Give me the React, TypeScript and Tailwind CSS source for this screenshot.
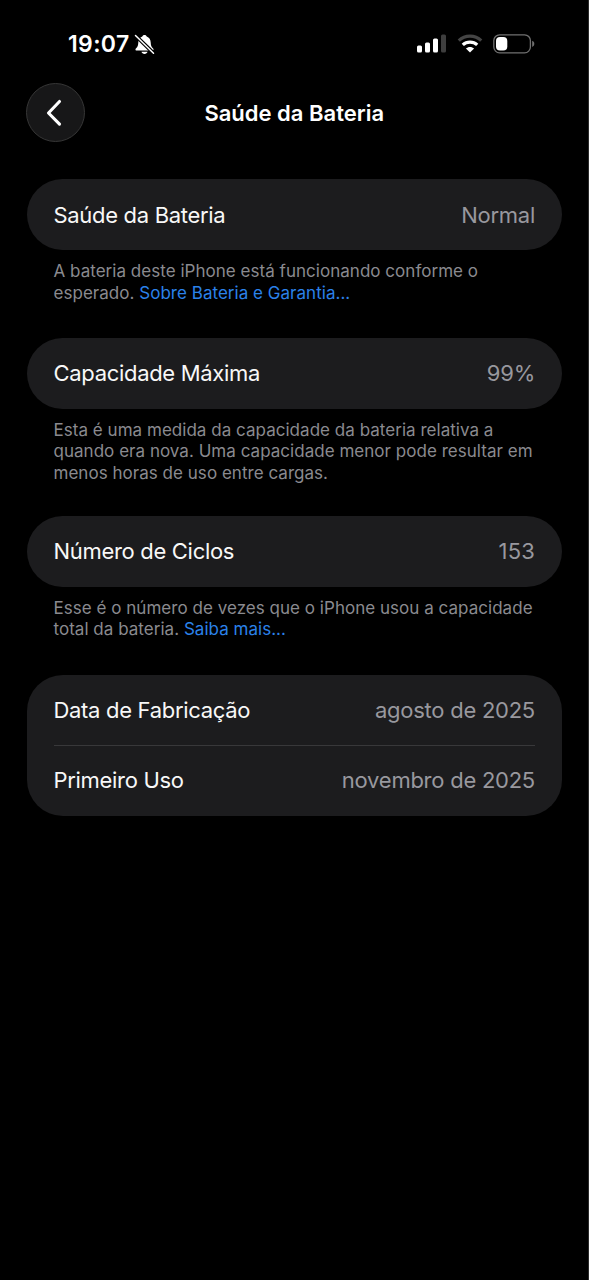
import React from 'react';

interface RowProps {
  label: string;
  value: string;
  valueClass?: string;
}

const Row: React.FC<RowProps> = ({ label, value, valueClass = 'tracking-[-0.25px]' }) => (
  <div className="flex h-[70.5px] items-center justify-between whitespace-nowrap text-[22px] leading-7">
    <span className="tracking-[-0.31px] text-[#f8f8f8]">{label}</span>
    <span className={`text-[#98989e] ${valueClass}`}>{value}</span>
  </div>
);

const Card: React.FC<{ children: React.ReactNode }> = ({ children }) => (
  <div className="rounded-[36px] bg-[#1c1c1e] px-[27px]">{children}</div>
);

const Note: React.FC<{ children: React.ReactNode }> = ({ children }) => (
  <p className="whitespace-nowrap px-[27px] pt-[11.3px] text-[17px] leading-[21.5px] tracking-[0.03px] text-[#8a8a8f]">
    {children}
  </p>
);

const BellOffIcon = () => (
  <svg width="21" height="21" viewBox="0 0 21 21" fill="none">
    <path
      d="M10.5 1C9.3 1 8.5 1.7 8.3 2.5C5.6 3.4 4.4 5.6 4.3 8.4C4.2 11.5 3.6 12.8 2.1 14.2C1 15.3 1.3 16.6 2.8 16.6H18.2C19.7 16.6 20 15.3 18.9 14.2C17.4 12.8 16.8 11.5 16.7 8.4C16.6 5.6 15.4 3.4 12.7 2.5C12.5 1.7 11.7 1 10.5 1Z"
      fill="white"
    />
    <path d="M7.5 17.7H13.5C13.2 19 12 19.9 10.5 19.9S7.8 19 7.5 17.7Z" fill="white" />
    <path d="M1.5 1.5L19.5 19.2" stroke="black" strokeWidth="3.8" />
    <path d="M1.5 1.5L19.5 19.2" stroke="white" strokeWidth="1.5" strokeLinecap="round" />
  </svg>
);

const SignalIcon = () => (
  <svg width="29" height="19" viewBox="0 0 29 19" fill="white">
    <rect x="0" y="11.5" width="5" height="7" rx="1.5" />
    <rect x="8" y="8.5" width="5" height="10" rx="1.5" />
    <rect x="16" y="4.5" width="5" height="14" rx="1.5" />
    <rect x="24" y="0.5" width="5" height="18" rx="1.5" fill="#3e3e3e" />
  </svg>
);

const WifiIcon = () => (
  <svg width="26" height="19" viewBox="0 0 26 19" fill="none">
    <path d="M1.8 6.6C8 0.5 18 0.5 24.2 6.6" stroke="#444" strokeWidth="3.2" />
    <path d="M5.8 10.9C9.8 7.1 16.2 7.1 20.2 10.9" stroke="white" strokeWidth="3.2" />
    <path d="M13 18.6L8.9 14.6C11.2 12.5 14.8 12.5 17.1 14.6Z" fill="white" />
  </svg>
);

const BatteryIcon = () => (
  <svg width="42" height="20" viewBox="0 0 42 20" fill="none">
    <rect x="0.8" y="0.8" width="36.6" height="18" rx="5.8" stroke="#707070" strokeWidth="1.3" />
    <rect x="3" y="3" width="11.3" height="13.6" rx="4" fill="white" />
    <path d="M39.2 6.7C40.6 7.2 41.3 8.4 41.3 9.8S40.6 12.4 39.2 12.9Z" fill="#707070" />
  </svg>
);

const App: React.FC = () => {
  return (
    <div className="h-[1280px] w-[589px] overflow-hidden border-r border-[#2c2c2c] bg-black pl-[26.5px] pr-[26px] font-['Inter',sans-serif] text-white">
      <div className="flex h-[83px] items-start justify-between pl-[41.5px] pr-[27px] pt-[28px]">
        <div className="flex items-center gap-1">
          <span className="text-[23px] font-semibold leading-8 tracking-[0.35px]">19:07</span>
          <BellOffIcon />
        </div>
        <div className="flex h-[31px] items-center gap-[10.5px]">
          <SignalIcon />
          <WifiIcon />
          <BatteryIcon />
        </div>
      </div>

      <header className="grid h-[59px] grid-cols-[59px_1fr_59px] items-center">
        <button
          className="-ml-[0.5px] flex h-[59px] w-[59px] items-center justify-center rounded-full border border-[#363636] bg-[#171718]"
          aria-label="Voltar"
        >
          <svg width="18" height="28" viewBox="0 0 18 28" fill="none" className="mr-1">
            <path
              d="M14.5 2.5L3.5 14L14.5 25.2"
              stroke="white"
              strokeWidth="3.1"
              strokeLinecap="round"
              strokeLinejoin="round"
            />
          </svg>
        </button>
        <h1 className="whitespace-nowrap text-center text-[22px] font-semibold leading-7">
          Saúde da Bateria
        </h1>
      </header>

      <main className="pt-[37.4px]">
        <section className="h-[158.7px]">
          <Card>
            <Row label="Saúde da Bateria" value="Normal" />
          </Card>
          <Note>
            <span>A bateria deste iPhone está funcionando conforme o</span>
            <br />
            <span>esperado. </span>
            <a className="text-[#2b82ea]">Sobre Bateria e Garantia...</a>
          </Note>
        </section>

        <section className="h-[178px]">
          <Card>
            <Row label="Capacidade Máxima" value="99%" />
          </Card>
          <Note>
            <span>Esta é uma medida da capacidade da bateria relativa a</span>
            <br />
            <span>quando era nova. Uma capacidade menor pode resultar em</span>
            <br />
            <span>menos horas de uso entre cargas.</span>
          </Note>
        </section>

        <section className="h-[158.5px]">
          <Card>
            <Row label="Número de Ciclos" value="153" valueClass="tracking-[0.2px]" />
          </Card>
          <Note>
            <span>Esse é o número de vezes que o iPhone usou a capacidade</span>
            <br />
            <span>total da bateria. </span>
            <a className="text-[#2b82ea]">Saiba mais...</a>
          </Note>
        </section>

        <section>
          <Card>
            <Row label="Data de Fabricação" value="agosto de 2025" />
            <div className="-mb-px -mt-[0.5px] h-[1.5px] bg-[#38383a]" />
            <Row label="Primeiro Uso" value="novembro de 2025" />
          </Card>
        </section>
      </main>
    </div>
  );
};

export default App;
